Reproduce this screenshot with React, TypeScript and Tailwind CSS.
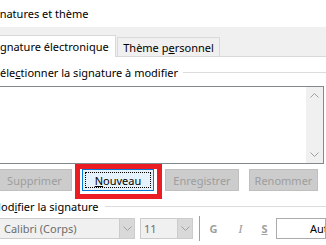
import React from 'react';

function Chevron({ up = false, color = '#a0a0a0' }: { up?: boolean; color?: string }) {
  return (
    <svg width="9" height="5" viewBox="0 0 9 5" className="block">
      <polyline
        points={up ? '0.5,4.5 4.5,0.5 8.5,4.5' : '0.5,0.5 4.5,4.5 8.5,0.5'}
        fill="none"
        stroke={color}
        strokeWidth="1"
      />
    </svg>
  );
}

function DisabledButton({ label, width }: { label: string; width: string }) {
  return (
    <div
      className={`${width} h-[22px] shrink-0 flex items-center justify-center bg-[#cccccc] border border-[#bfbfbf] text-[#9d9d9d]`}
    >
      {label}
    </div>
  );
}

export default function App() {
  return (
    <div className="w-[326px] h-[245px] overflow-hidden bg-white text-[11px] leading-none text-black font-['Noto_Sans','Segoe_UI',sans-serif]">
      {/* titre de la fenêtre */}
      <div className="h-[27px] flex items-center">
        <div className="-ml-[16px] shrink-0 whitespace-nowrap">Signatures et thème</div>
      </div>

      {/* onglets */}
      <div className="h-[29px] bg-[#f0f0f0] flex items-end">
        <div className="relative z-10 -mb-px w-[116px] h-[22px] shrink-0 overflow-hidden flex items-center bg-white border-t border-r border-[#d9d9d9] whitespace-nowrap">
          <span className="-ml-[9px]">Signature électronique</span>
        </div>
        <div className="ml-[1px] h-[19px] w-[103px] shrink-0 flex items-center justify-center border-t border-x border-[#d9d9d9] whitespace-nowrap">
          Thème p<span className="underline">e</span>rsonnel
        </div>
      </div>

      <div className="border-t border-[#d9d9d9] flex flex-col">
        {/* choix de la signature */}
        <div className="mt-[7px] h-[17px] flex items-center">
          <div className="-ml-[6px] shrink-0 whitespace-nowrap">
            Séle<span className="underline">c</span>tionner la signature à modifier
          </div>
          <div className="ml-[5px] flex-1 h-px bg-[#dcdcdc]" />
        </div>

        <div className="mt-[5px] -ml-[5px] w-[329px] h-[78px] border border-[#828790] flex justify-end">
          <div className="w-[17px] bg-[#f0f0f0] flex flex-col items-center justify-between py-[6px]">
            <Chevron up />
            <Chevron />
          </div>
        </div>

        {/* boutons */}
        <div className="mt-[5px] -ml-[3px] flex">
          <DisabledButton label="Supprimer" width="w-[75px]" />
          <div className="relative ml-[10px] shrink-0">
            <div className="absolute -left-[7px] -right-[8px] -top-[5px] -bottom-[8px] border-[5px] border-[#ec1c24]" />
            <div className="w-[72px] h-[22px] p-[2px] bg-[#e5f1fb] border border-[#0078d7]">
              <div className="w-full h-full flex items-center justify-center border border-dotted border-black">
                <span className="underline">N</span>ouveau
              </div>
            </div>
          </div>
          <div className="ml-[11px]">
            <DisabledButton label="Enregistrer" width="w-[74px]" />
          </div>
          <div className="ml-[10px]">
            <DisabledButton label="Renommer" width="w-[69px]" />
          </div>
        </div>

        {/* modifier la signature */}
        <div className="mt-[7px] h-[17px] flex items-center">
          <div className="-ml-[9px] shrink-0 whitespace-nowrap">
            Mod<span className="underline">i</span>fier la signature
          </div>
          <div className="ml-[6px] flex-1 h-px bg-[#dcdcdc]" />
        </div>

        <div className="mt-[3px] h-[21px] flex items-stretch">
          <div className="-ml-[4px] w-[139px] shrink-0 flex border border-[#cccccc] bg-[#f0f0f0]">
            <div className="flex-1 flex items-center pl-[7px] text-[#6d6d6d] whitespace-nowrap">Calibri (Corps)</div>
            <div className="w-[15px] bg-[#d9d9d9] border-l border-[#cccccc] flex items-center justify-center">
              <Chevron />
            </div>
          </div>
          <div className="ml-[5px] w-[53px] shrink-0 flex border border-[#cccccc] bg-[#f0f0f0]">
            <div className="flex-1 flex items-center pl-[3px] text-[#6d6d6d]">11</div>
            <div className="w-[15px] bg-[#d9d9d9] border-l border-[#cccccc] flex items-center justify-center">
              <Chevron />
            </div>
          </div>
          <div className="ml-[6px] w-px -my-[2px] bg-[#a0a0a0]" />
          <div className="ml-[9px] w-[10px] flex items-center justify-center font-bold text-[#a0a0a0]">G</div>
          <div className="ml-[18px] w-[10px] flex items-center justify-center italic text-[#a0a0a0] font-['Liberation_Serif',serif] text-[13px]">I</div>
          <div className="ml-[15px] w-[10px] flex items-center justify-center font-bold underline text-[#a0a0a0]">S</div>
          <div className="ml-[7px] w-[50px] shrink-0 overflow-hidden flex items-center pl-[33px] border border-[#ababab] bg-white whitespace-nowrap">
            Automatique
          </div>
        </div>
      </div>
    </div>
  );
}
